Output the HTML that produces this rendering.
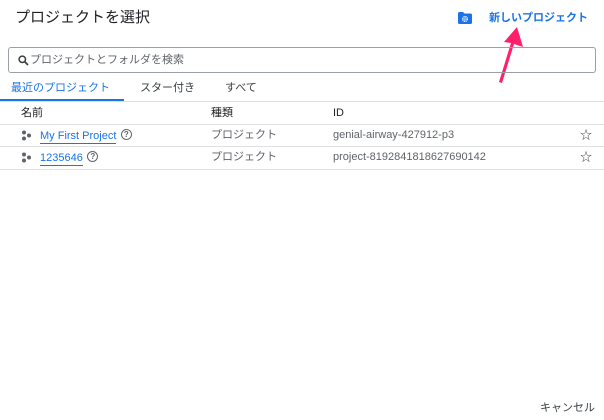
<!DOCTYPE html>
<html><head><meta charset="utf-8"><style>
*{margin:0;padding:0;box-sizing:border-box}
body{width:604px;height:420px;background:#fff;font-family:"Liberation Sans","Noto Sans CJK JP",sans-serif;position:relative;overflow:hidden;color:#3c4043}
.a{position:absolute;white-space:nowrap;line-height:14px}
.line{position:absolute;left:0;width:604px;height:1px;background:#e0e0e0}
.t{font-size:11px;color:#5f6368}
.lk{color:#1a73e8;border-bottom:1px solid #1a73e8;font-size:11px;line-height:13px;display:inline-block}
.q{display:inline-block;width:11px;height:11px;border:1.2px solid #5f6368;border-radius:50%;font-size:8px;text-align:center;line-height:9px;color:#5f6368;font-weight:bold;vertical-align:top;margin-top:1px}
</style></head><body>
<div class="a" style="left:15px;top:9px;font-size:15px;line-height:18px;color:#202124">プロジェクトを選択</div>
<svg class="a" style="left:458px;top:12px" width="14" height="12" viewBox="0 0 14 12"><path d="M0 1.5Q0 0 1.5 0H5L6.5 1.5H12.5Q14 1.5 14 3V10.5Q14 12 12.5 12H1.5Q0 12 0 10.5Z" fill="#1a73e8"/><circle cx="7" cy="7" r="2.3" fill="none" stroke="#fff" stroke-width="1.4" stroke-dasharray="1.2 0.6"/><circle cx="7" cy="7" r="0.8" fill="#fff"/></svg>
<div class="a" style="left:489px;top:11px;font-size:11px;color:#1a73e8;font-weight:bold">新しいプロジェクト</div>
<svg class="a" style="left:490px;top:20px" width="40" height="70" viewBox="0 0 40 70"><path d="M27 7L14 22L21 23L9 62L12 63L24 24L33 27Z" fill="#ff1f6b"/></svg>
<div class="a" style="left:8px;top:47px;width:588px;height:26px;border:1px solid #9aa0a6;border-radius:3px"></div>
<svg class="a" style="left:18px;top:55px" width="11" height="11" viewBox="0 0 11 11"><circle cx="4.3" cy="4.3" r="3.2" fill="none" stroke="#3c4043" stroke-width="1.5"/><path d="M6.6 6.6L10 10" stroke="#3c4043" stroke-width="1.7"/></svg>
<div class="a" style="left:30px;top:53px;font-size:11px;color:#5f6368">プロジェクトとフォルダを検索</div>
<div class="a" style="left:11px;top:81px;font-size:11px;color:#1a73e8">最近のプロジェクト</div>
<div class="a" style="left:140px;top:81px;font-size:11px;color:#3c4043">スター付き</div>
<div class="a" style="left:225px;top:81px;font-size:11px;color:#3c4043">すべて</div>
<div class="line" style="top:101px"></div>
<div class="a" style="left:0;top:99px;width:124px;height:2px;background:#1a73e8"></div>
<div class="a" style="left:21px;top:106px;font-size:11px;color:#202124">名前</div>
<div class="a" style="left:211px;top:106px;font-size:11px;color:#202124">種類</div>
<div class="a" style="left:333px;top:106px;font-size:11px;color:#202124">ID</div>
<div class="line" style="top:124px"></div>
<div class="line" style="top:146px"></div>
<div class="line" style="top:169px"></div>
<svg class="a" style="left:21px;top:130px" width="11" height="11" viewBox="0 0 11 11"><circle cx="3" cy="2.5" r="2" fill="#5f6368"/><circle cx="8" cy="5.5" r="2" fill="#5f6368"/><circle cx="3" cy="8.5" r="2" fill="#5f6368"/></svg>
<svg class="a" style="left:21px;top:152px" width="11" height="11" viewBox="0 0 11 11"><circle cx="3" cy="2.5" r="2" fill="#5f6368"/><circle cx="8" cy="5.5" r="2" fill="#5f6368"/><circle cx="3" cy="8.5" r="2" fill="#5f6368"/></svg>
<div class="a" style="left:40px;top:128px"><span class="lk">My First Project</span> <span class="q">?</span></div>
<div class="a" style="left:40px;top:150px"><span class="lk">1235646</span> <span class="q">?</span></div>
<div class="a t" style="left:211px;top:128px">プロジェクト</div>
<div class="a t" style="left:211px;top:150px">プロジェクト</div>
<div class="a t" style="left:333px;top:128px">genial-airway-427912-p3</div>
<div class="a t" style="left:333px;top:150px">project-8192841818627690142</div>
<div class="a" style="left:580px;top:128px;font-size:12px;color:#3c4043">☆</div>
<div class="a" style="left:580px;top:150px;font-size:12px;color:#3c4043">☆</div>
<div class="a" style="left:540px;top:401px;font-size:11px;color:#3c4043">キャンセル</div>
</body></html>
